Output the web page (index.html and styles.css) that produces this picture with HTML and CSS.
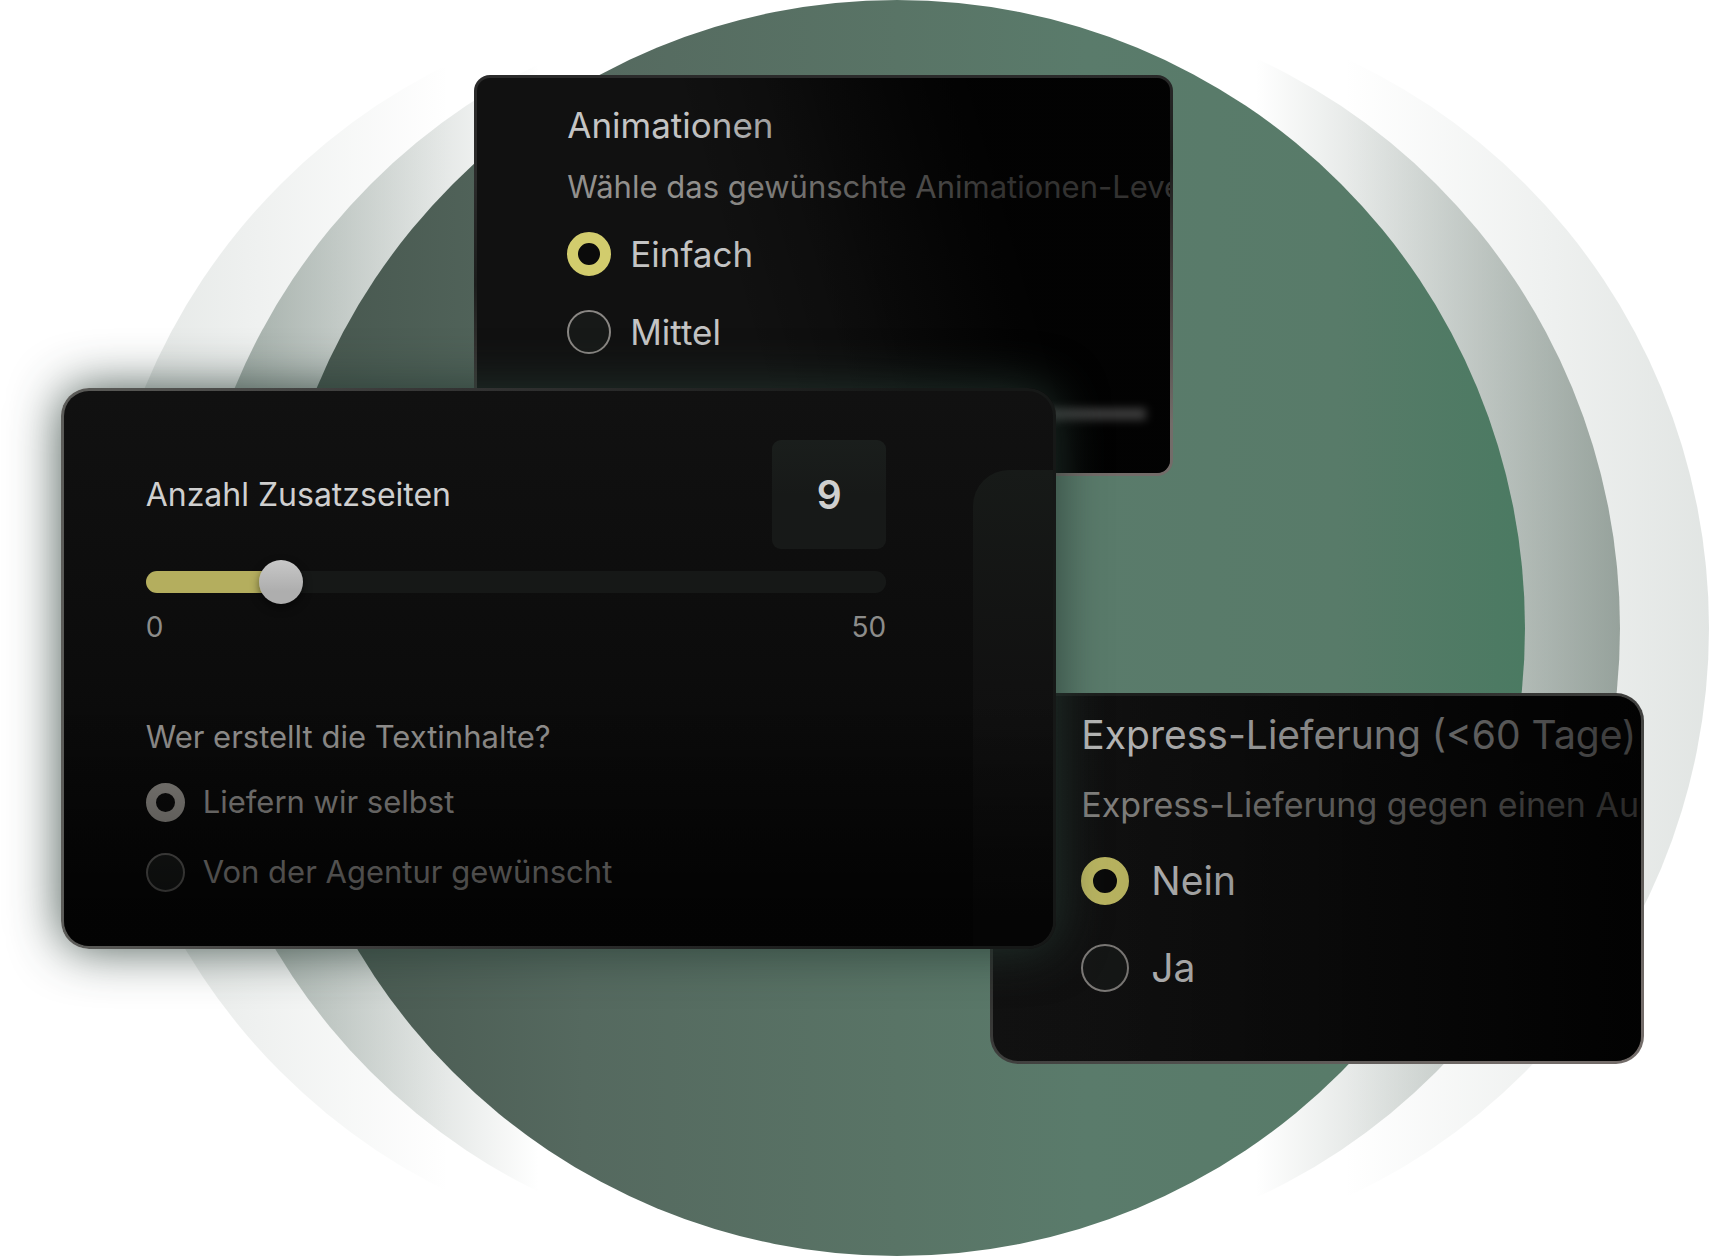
FILE: index.html
```html
<!DOCTYPE html>
<html lang="de">
<head>
    <meta charset="UTF-8">
    <meta name="viewport" content="width=device-width, initial-scale=1.0">
    <title>Preisrechner</title>
    <link rel="stylesheet" href="styles.css">
</head>
<body>
    <main class="stage">
        <!-- Circles behind the cards -->
        <svg class="circles" viewBox="0 0 1709 1257" aria-hidden="true">
            <defs>
                <linearGradient id="main" x1="0" x2="1" y1="0" y2="0">
                    <stop offset="0" stop-color="#46554d"/>
                    <stop offset="0.25" stop-color="#55695f"/>
                    <stop offset="0.5" stop-color="#597466"/>
                    <stop offset="0.65" stop-color="#5a7b6b"/>
                    <stop offset="0.85" stop-color="#587b69"/>
                    <stop offset="1" stop-color="#4b7a62"/>
                </linearGradient>
                <linearGradient id="mid-left" x1="0" x2="1" y1="0" y2="0">
                    <stop offset="0" stop-color="#6b7d74" stop-opacity="0.65"/>
                    <stop offset="0.28" stop-color="#6b7d74" stop-opacity="0"/>
                </linearGradient>
                <linearGradient id="outer-left" x1="0" x2="1" y1="0" y2="0">
                    <stop offset="0" stop-color="#6b7d74" stop-opacity="0.2"/>
                    <stop offset="0.28" stop-color="#6b7d74" stop-opacity="0"/>
                </linearGradient>
                <linearGradient id="mid-right" x1="0" x2="1" y1="0" y2="0">
                    <stop offset="0.71" stop-color="#6b7d74" stop-opacity="0"/>
                    <stop offset="1" stop-color="#64756c" stop-opacity="0.62"/>
                </linearGradient>
                <linearGradient id="outer-right" x1="0" x2="1" y1="0" y2="0">
                    <stop offset="0.71" stop-color="#6b7d74" stop-opacity="0"/>
                    <stop offset="1" stop-color="#6b7d74" stop-opacity="0.2"/>
                </linearGradient>
            </defs>
            <circle cx="725" cy="628" r="628" fill="url(#outer-left)"/>
            <circle cx="1081" cy="628" r="628" fill="url(#outer-right)"/>
            <circle cx="815" cy="628" r="628" fill="url(#mid-left)"/>
            <circle cx="992" cy="628" r="628" fill="url(#mid-right)"/>
            <circle cx="897" cy="628" r="628" fill="url(#main)"/>
        </svg>

        <section class="card card-animation">
            <h2>Animationen</h2>
            <p class="hint">Wähle das gewünschte Animationen-Leve</p>
            <div class="options">
                <label><input type="radio" name="animation" checked>Einfach</label>
                <label><input type="radio" name="animation">Mittel</label>
            </div>
            <div class="blurred"></div>
        </section>

        <section class="card card-express">
            <h2>Express-Lieferung (&lt;60 Tage)</h2>
            <p class="hint">Express-Lieferung gegen einen Au</p>
            <div class="options">
                <label><input type="radio" name="express" checked>Nein</label>
                <label><input type="radio" name="express">Ja</label>
            </div>
        </section>

        <section class="card card-pages">
            <div class="side-panel"></div>
            <div class="pages-head">
                <label for="pages">Anzahl Zusatzseiten</label>
                <output for="pages">9</output>
            </div>
            <input class="slider" type="range" id="pages" min="1" max="50" value="9">
            <div class="scale">
                <span>0</span>
                <span>50</span>
            </div>
            <h2>Wer erstellt die Textinhalte?</h2>
            <div class="options">
                <label><input type="radio" name="content" checked>Liefern wir selbst</label>
                <label><input type="radio" name="content">Von der Agentur gewünscht</label>
            </div>
        </section>
    </main>
</body>
</html>
```
FILE: styles.css
```css
* {
    box-sizing: border-box;
}

body {
    margin: 0;
    background: #fff;
    font-family: Inter, "Liberation Sans", sans-serif;
    color: #cfcfcf;
}

h2, p {
    margin: 0;
    font-weight: 400;
    white-space: nowrap;
}

.stage {
    position: relative;
    overflow: hidden;
}

.circles {
    display: block;
    width: 100%;
    height: auto;
}

/* Cards float over the circles, the gradient border is the second background layer */
.card {
    position: absolute;
    overflow: hidden;
    border: 3px solid transparent;
}

/* Dark fade over the card content */
.card::after {
    content: "";
    position: absolute;
    inset: 0;
    pointer-events: none;
}

.options {
    display: flex;
    flex-direction: column;
}

.options label {
    display: flex;
    align-items: center;
    white-space: nowrap;
}

input[type="radio"] {
    appearance: none;
    flex: none;
    margin: 0;
    border: 2px solid #8a8784;
    border-radius: 50%;
    background: #171918;
}

input[type="radio"]:checked {
    border: 11px solid #d2cc6d;
    background: #0b0b0b;
}

/* Animationen */
.card-animation {
    left: 27.75%;
    top: 6%;
    width: 40.9%;
    padding: 25px 0 119px 90px;
    border-radius: 16px;
    background:
        linear-gradient(74deg, #111 50%, #070707 75%) padding-box,
        linear-gradient(170deg, #2b2b2b 20%, #1c1d1c 40%, #736c69 90%) border-box;
    color: #c4c4c4;
}

.card-animation::after {
    background: linear-gradient(74deg, transparent 38%, rgba(0, 0, 0, 0.65) 75%);
}

.card-animation h2 {
    font-size: 35px;
    line-height: 44px;
}

.hint {
    color: #92908d;
}

.card-animation .hint {
    margin-top: 20px;
    font-size: 31px;
    line-height: 40px;
}

.card-animation .options {
    gap: 34px;
    margin-top: 25px;
    font-size: 35px;
    line-height: 44px;
}

.card-animation .options label {
    gap: 19px;
}

.card-animation input[type="radio"] {
    width: 44px;
    height: 44px;
}

.blurred {
    position: absolute;
    right: 24px;
    bottom: 53px;
    width: 130px;
    height: 12px;
    background: #a8a8a8;
    filter: blur(4px);
}

/* Anzahl Zusatzseiten */
.card-pages {
    left: 3.55%;
    top: 30.9%;
    width: 58.25%;
    padding: 49px 167px 54px 82px;
    border-radius: 28px;
    background:
        linear-gradient(#111, #0c0c0c 50%, #070707 90%) padding-box,
        linear-gradient(90deg, #5c5c59, #333 40%, #161817 85%) border-box;
    box-shadow: 0 0 50px 0 rgba(38, 58, 50, 0.85);
}

.card-pages::after {
    background: linear-gradient(transparent 55%, rgba(0, 0, 0, 0.55) 95%);
}

.side-panel {
    position: absolute;
    top: 79px;
    right: 0;
    bottom: 0;
    width: 80px;
    border-top-left-radius: 36px;
    background: linear-gradient(#171a18, #111 45%, #0a0a0a);
}

.pages-head {
    display: flex;
    align-items: center;
    justify-content: space-between;
    font-size: 32px;
}

.pages-head output {
    width: 114px;
    border-radius: 9px;
    background: linear-gradient(#1a1e1c, #171918 50%);
    font-size: 39px;
    font-weight: 600;
    line-height: 109px;
    text-align: center;
}

.slider {
    display: block;
    appearance: none;
    width: 100%;
    height: 44px;
    margin: 11px 0 0;
    background: transparent;
}

.slider::-webkit-slider-runnable-track {
    height: 22px;
    border-radius: 11px;
    background: linear-gradient(90deg, #b4ae5e 18%, #161817 18%);
}

.slider::-webkit-slider-thumb {
    appearance: none;
    width: 44px;
    height: 44px;
    margin-top: -11px;
    border-radius: 50%;
    background: linear-gradient(#c8c8c8, #aeaeae 70%);
    box-shadow: 0 4px 8px rgba(0, 0, 0, 0.5);
}

.scale {
    display: flex;
    justify-content: space-between;
    margin-top: 5px;
    font-size: 28px;
    line-height: 36px;
    color: #8c8c8a;
}

.card-pages h2 {
    margin-top: 72px;
    font-size: 31px;
    line-height: 40px;
    color: #989694;
}

.card-pages .options {
    gap: 30px;
    margin-top: 25px;
    font-size: 31px;
    line-height: 40px;
    color: #8c8a88;
}

.card-pages .options label {
    gap: 18px;
}

.card-pages input[type="radio"] {
    width: 39px;
    height: 39px;
    border-color: #5c5b59;
}

.card-pages input[type="radio"]:checked {
    border-width: 10px;
    border-color: #8c8984;
}

/* Express-Lieferung */
.card-express {
    left: 57.95%;
    top: 55.15%;
    width: 38.25%;
    padding: 15px 0 69px 88px;
    border-radius: 28px;
    background:
        linear-gradient(90deg, #131313, #0f0f0f 50%, #080808) padding-box,
        linear-gradient(150deg, #1c1d1c 20%, #4a4a48 60%, #736c69 90%) border-box;
}

.card-express::after {
    background: linear-gradient(90deg, rgba(0, 0, 0, 0.1) 15%, rgba(0, 0, 0, 0.7) 95%);
}

.card-express h2 {
    font-size: 39px;
    line-height: 48px;
}

.card-express .hint {
    margin-top: 24px;
    font-size: 34px;
    line-height: 44px;
}

.card-express .options {
    gap: 39px;
    margin-top: 30px;
    font-size: 39px;
    line-height: 48px;
}

.card-express .options label {
    gap: 22px;
}

.card-express input[type="radio"] {
    width: 48px;
    height: 48px;
}

.card-express input[type="radio"]:checked {
    border-width: 12px;
}
```
